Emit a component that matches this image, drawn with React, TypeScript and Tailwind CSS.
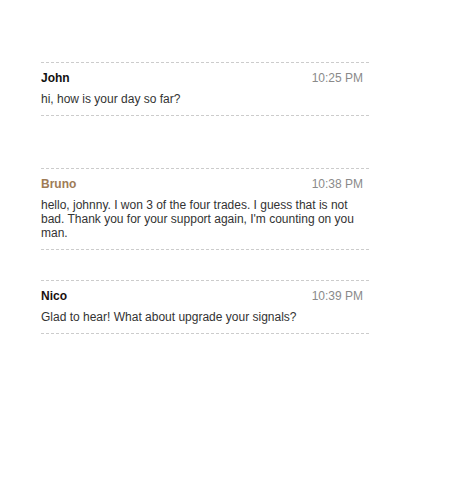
export default function App() {
  const messages = [
    { name: "John", time: "10:25 PM", text: "hi, how is your day so far?", color: "text-[#111111]", gap: "mt-0" },
    {
      name: "Bruno",
      time: "10:38 PM",
      text: "hello, johnny. I won 3 of the four trades. I guess that is not bad. Thank you for your support again, I'm counting on you man.",
      color: "text-[#9e7b56]",
      gap: "mt-[52px]",
    },
    { name: "Nico", time: "10:39 PM", text: "Glad to hear! What about upgrade your signals?", color: "text-[#1a1010]", gap: "mt-[30px]" },
  ];

  return (
    <div className="min-h-[477px] bg-white pl-[41px] pt-[62px] font-['Liberation_Sans',Arial,sans-serif] text-[12px]">
      <div className="w-[328px]">
        {messages.map((m, i) => (
          <div key={i} className={`${m.gap} border-y border-dashed border-[#cccccc] pt-[8px] pb-[9px] pr-[6px]`}>
            <div className="flex items-center justify-between leading-[14px]">
              <span className={`font-bold ${m.color}`}>{m.name}</span>
              <span className="text-[#8a8a8a]">{m.time}</span>
            </div>
            <p className="mt-[7px] leading-[14px] text-[#333333]">{m.text}</p>
          </div>
        ))}
      </div>
    </div>
  );
}
